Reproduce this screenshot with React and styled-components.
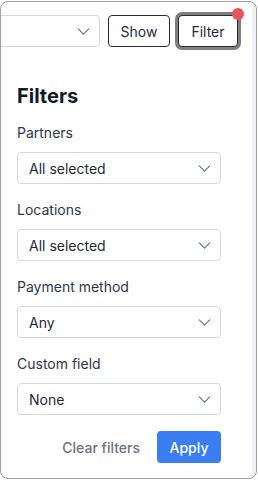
import React from "react";
import styled, { createGlobalStyle } from "styled-components";
import { ChevronDown } from "lucide-react";

const GlobalStyle = createGlobalStyle`
  body {
    margin: 0;
    background: #fff;
    font-family: Inter, "Noto Sans", "Liberation Sans", sans-serif;
  }
  * {
    box-sizing: border-box;
  }
`;

const Frame = styled.div`
  margin-top: 1px;
  width: 257px;
  height: 478px;
  border: 1px solid #a2a2a2;
  border-radius: 8px;
  overflow: hidden;
  background: #fff;
  box-shadow: inset -4px 0 0 #f0f1f5;
`;

const TopBar = styled.div`
  display: flex;
  justify-content: flex-end;
  align-items: center;
  gap: 8px;
  padding: 13px 18px 0 0;
`;

const SelectBox = styled.div`
  flex-shrink: 0;
  display: flex;
  align-items: center;
  justify-content: space-between;
  width: ${(p) => p.$width || "204px"};
  height: 32px;
  padding: 0 5px 0 11px;
  border: 1px solid #d3d8df;
  border-radius: 4px;
  background: #fff;
  font-size: 14px;
  color: #1f2937;
`;

const Button = styled.button`
  position: relative;
  flex-shrink: 0;
  width: ${(p) => p.$width};
  height: 32px;
  padding: 0;
  border: 1px solid #2b2b2b;
  border-radius: 4px;
  background: #fff;
  font-family: inherit;
  font-size: 14px;
  color: #1f2937;
  box-shadow: ${(p) => (p.$focused ? "0 0 0 3px #7d7f80" : "none")};
`;

const Dot = styled.span`
  position: absolute;
  top: -8px;
  right: -7px;
  width: 12px;
  height: 12px;
  border-radius: 50%;
  background: #ea5455;
`;

const Panel = styled.div`
  padding: 35px 0 0 16px;
`;

const Heading = styled.h2`
  margin: 0 0 13px;
  font-size: 20px;
  line-height: 28px;
  font-weight: 700;
  color: #111827;
`;

const Field = styled.div`
  display: flex;
  flex-direction: column;
  gap: 9px;
  margin-bottom: 16px;
`;

const Label = styled.div`
  font-size: 14px;
  line-height: 20px;
  color: #2d3748;
`;

const Actions = styled.div`
  display: flex;
  justify-content: flex-end;
  align-items: center;
  gap: 17px;
  width: 204px;
`;

const ClearButton = styled.button`
  padding: 0;
  border: none;
  background: none;
  font-family: inherit;
  font-size: 14px;
  font-weight: 500;
  color: #6b7280;
`;

const ApplyButton = styled.button`
  width: 64px;
  height: 32px;
  padding: 0;
  border: none;
  border-radius: 4px;
  background: #3b7ef2;
  font-family: inherit;
  font-size: 14px;
  font-weight: 500;
  color: #fff;
`;

const Chevron = () => <ChevronDown size={21} strokeWidth={1.3} color="#667085" />;

const fields = [
  { label: "Partners", value: "All selected" },
  { label: "Locations", value: "All selected" },
  { label: "Payment method", value: "Any" },
  { label: "Custom field", value: "None" },
];

const App = () => (
  <>
    <GlobalStyle />
    <Frame>
      <TopBar>
        <SelectBox $width="130px">
          <span />
          <Chevron />
        </SelectBox>
        <Button $width="62px">Show</Button>
        <Button $width="60px" $focused>
          Filter
          <Dot />
        </Button>
      </TopBar>

      <Panel>
        <Heading>Filters</Heading>
        {fields.map((f) => (
          <Field key={f.label}>
            <Label>{f.label}</Label>
            <SelectBox>
              <span>{f.value}</span>
              <Chevron />
            </SelectBox>
          </Field>
        ))}
        <Actions>
          <ClearButton>Clear filters</ClearButton>
          <ApplyButton>Apply</ApplyButton>
        </Actions>
      </Panel>
    </Frame>
  </>
);

export default App;
